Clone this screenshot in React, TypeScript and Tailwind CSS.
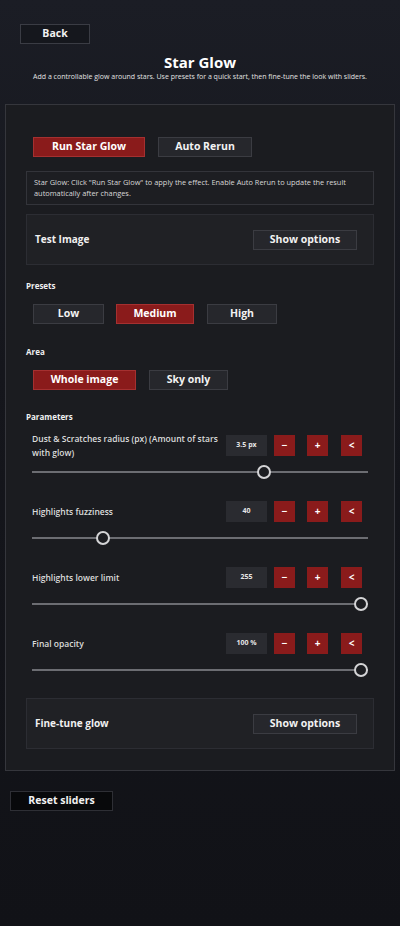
import React from "react";

const font = { fontFamily: '"Open Sans", "Noto Sans", sans-serif' };

function GrayBtn({ label, className = "" }: { label: string; className?: string }) {
  return (
    <button
      className={`flex h-[20px] items-center justify-center border border-[#3b3c42] bg-[#26272c] text-[10.5px] font-bold text-[#f2f2f2] ${className}`}
    >
      {label}
    </button>
  );
}

function RedBtn({ label, className = "" }: { label: string; className?: string }) {
  return (
    <button
      className={`flex h-[20px] items-center justify-center border border-[#a53030] bg-[#8a1b1b] text-[10.5px] font-bold text-white ${className}`}
    >
      {label}
    </button>
  );
}

function Param({ label, value, pos }: { label: string; value: string; pos: number }) {
  return (
    <div className="pl-[6px] pr-[6px]">
      <div className="flex h-[21px] items-center">
        <div className="w-[190px] text-[8.5px] leading-[14px] font-semibold text-[#dcdcdc]">{label}</div>
        <div className="ml-auto flex items-center">
          <div className="flex h-[21px] w-[41px] items-center justify-center bg-[#2a2b30] text-[7px] font-bold text-[#e6e6e6]">
            {value}
          </div>
          <button className="ml-[7px] flex h-[21px] w-[21px] items-center justify-center bg-[#8a1b1b] text-[10px] font-bold text-white">
            −
          </button>
          <button className="ml-[12px] flex h-[21px] w-[21px] items-center justify-center bg-[#8a1b1b] text-[10px] font-bold text-white">
            +
          </button>
          <button className="ml-[13px] mr-[6px] flex h-[21px] w-[21px] items-center justify-center bg-[#8a1b1b] text-[10px] font-bold text-white">
            &lt;
          </button>
        </div>
      </div>
      <div className="relative mt-[6px] h-[20px]">
        <div className="absolute top-[9px] right-0 left-0 h-[2px] bg-[#6c6d72]" />
        <div
          className="absolute top-[3px] h-[14px] w-[14px] rounded-full border-2 border-[#d4d4d6] bg-[#1c1d21]"
          style={{ left: `calc(${pos * 100}% - ${pos * 14}px)` }}
        />
      </div>
    </div>
  );
}

export default function App() {
  return (
    <div
      className="min-h-[926px] bg-[linear-gradient(180deg,#1b1d25_0%,#15161c_40%,#111217_100%)] pb-[115px] text-white"
      style={font}
    >
      <div className="pt-[24px] pl-[20px]">
        <button className="flex h-[20px] w-[70px] items-center justify-center border border-[#3a3c44] bg-[#15171d] text-[10.5px] font-bold text-[#f2f2f2]">
          Back
        </button>
      </div>

      <div className="mt-[8px] text-center">
        <h1 className="text-[15px] leading-[20px] font-bold text-white">Star Glow</h1>
        <p className="text-[7px] leading-[10px] text-[#e2e2e2]">
          Add a controllable glow around stars. Use presets for a quick start, then fine-tune the look with sliders.
        </p>
      </div>

      <main className="mx-[5px] mt-[22px] border border-[#35363c] bg-[#1b1c20] px-[20px] pt-[32px] pb-[21px]">
        <div className="flex pl-[7px]">
          <RedBtn label="Run Star Glow" className="w-[112px]" />
          <GrayBtn label="Auto Rerun" className="ml-[13px] w-[94px]" />
        </div>

        <div className="mt-[14px] border border-[#33343a] bg-[#1d1e22] px-[7px] py-[5px] text-[7.4px] leading-[11px] text-[#d8d8d8]">
          Star Glow: Click "Run Star Glow" to apply the effect. Enable Auto Rerun to update the result automatically after changes.
        </div>

        <div className="mt-[9px] flex h-[51px] items-center border border-[#2c2d33] bg-[#202125] pr-[16px] pl-[8px]">
          <span className="text-[10px] font-bold text-[#f0f0f0]">Test Image</span>
          <GrayBtn label="Show options" className="ml-auto w-[104px]" />
        </div>

        <div className="mt-[16px] text-[8px] leading-[10px] font-bold text-[#f0f0f0]">Presets</div>
        <div className="mt-[13px] flex pl-[7px]">
          <GrayBtn label="Low" className="w-[71px]" />
          <RedBtn label="Medium" className="ml-[12px] w-[78px]" />
          <GrayBtn label="High" className="ml-[13px] w-[70px]" />
        </div>

        <div className="mt-[23px] text-[8px] leading-[10px] font-bold text-[#f0f0f0]">Area</div>
        <div className="mt-[13px] flex pl-[7px]">
          <RedBtn label="Whole image" className="w-[103px]" />
          <GrayBtn label="Sky only" className="ml-[13px] w-[79px]" />
        </div>

        <div className="mt-[22px] text-[8px] leading-[10px] font-bold text-[#f0f0f0]">Parameters</div>
        <div className="mt-[13px] flex flex-col gap-[19px]">
          <Param label="Dust & Scratches radius (px) (Amount of stars with glow)" value="3.5 px" pos={0.7} />
          <Param label="Highlights fuzziness" value="40" pos={0.2} />
          <Param label="Highlights lower limit" value="255" pos={1} />
          <Param label="Final opacity" value="100 %" pos={1} />
        </div>

        <div className="mt-[18px] flex h-[51px] items-center border border-[#2c2d33] bg-[#202125] pr-[16px] pl-[8px]">
          <span className="text-[10px] font-bold text-[#f0f0f0]">Fine-tune glow</span>
          <GrayBtn label="Show options" className="ml-auto w-[104px]" />
        </div>
      </main>

      <div className="mt-[20px] pl-[10px]">
        <button className="flex h-[20px] w-[103px] items-center justify-center border border-[#2e2f35] bg-[#08090b] text-[10.5px] font-bold text-[#f2f2f2]">
          Reset sliders
        </button>
      </div>
    </div>
  );
}
